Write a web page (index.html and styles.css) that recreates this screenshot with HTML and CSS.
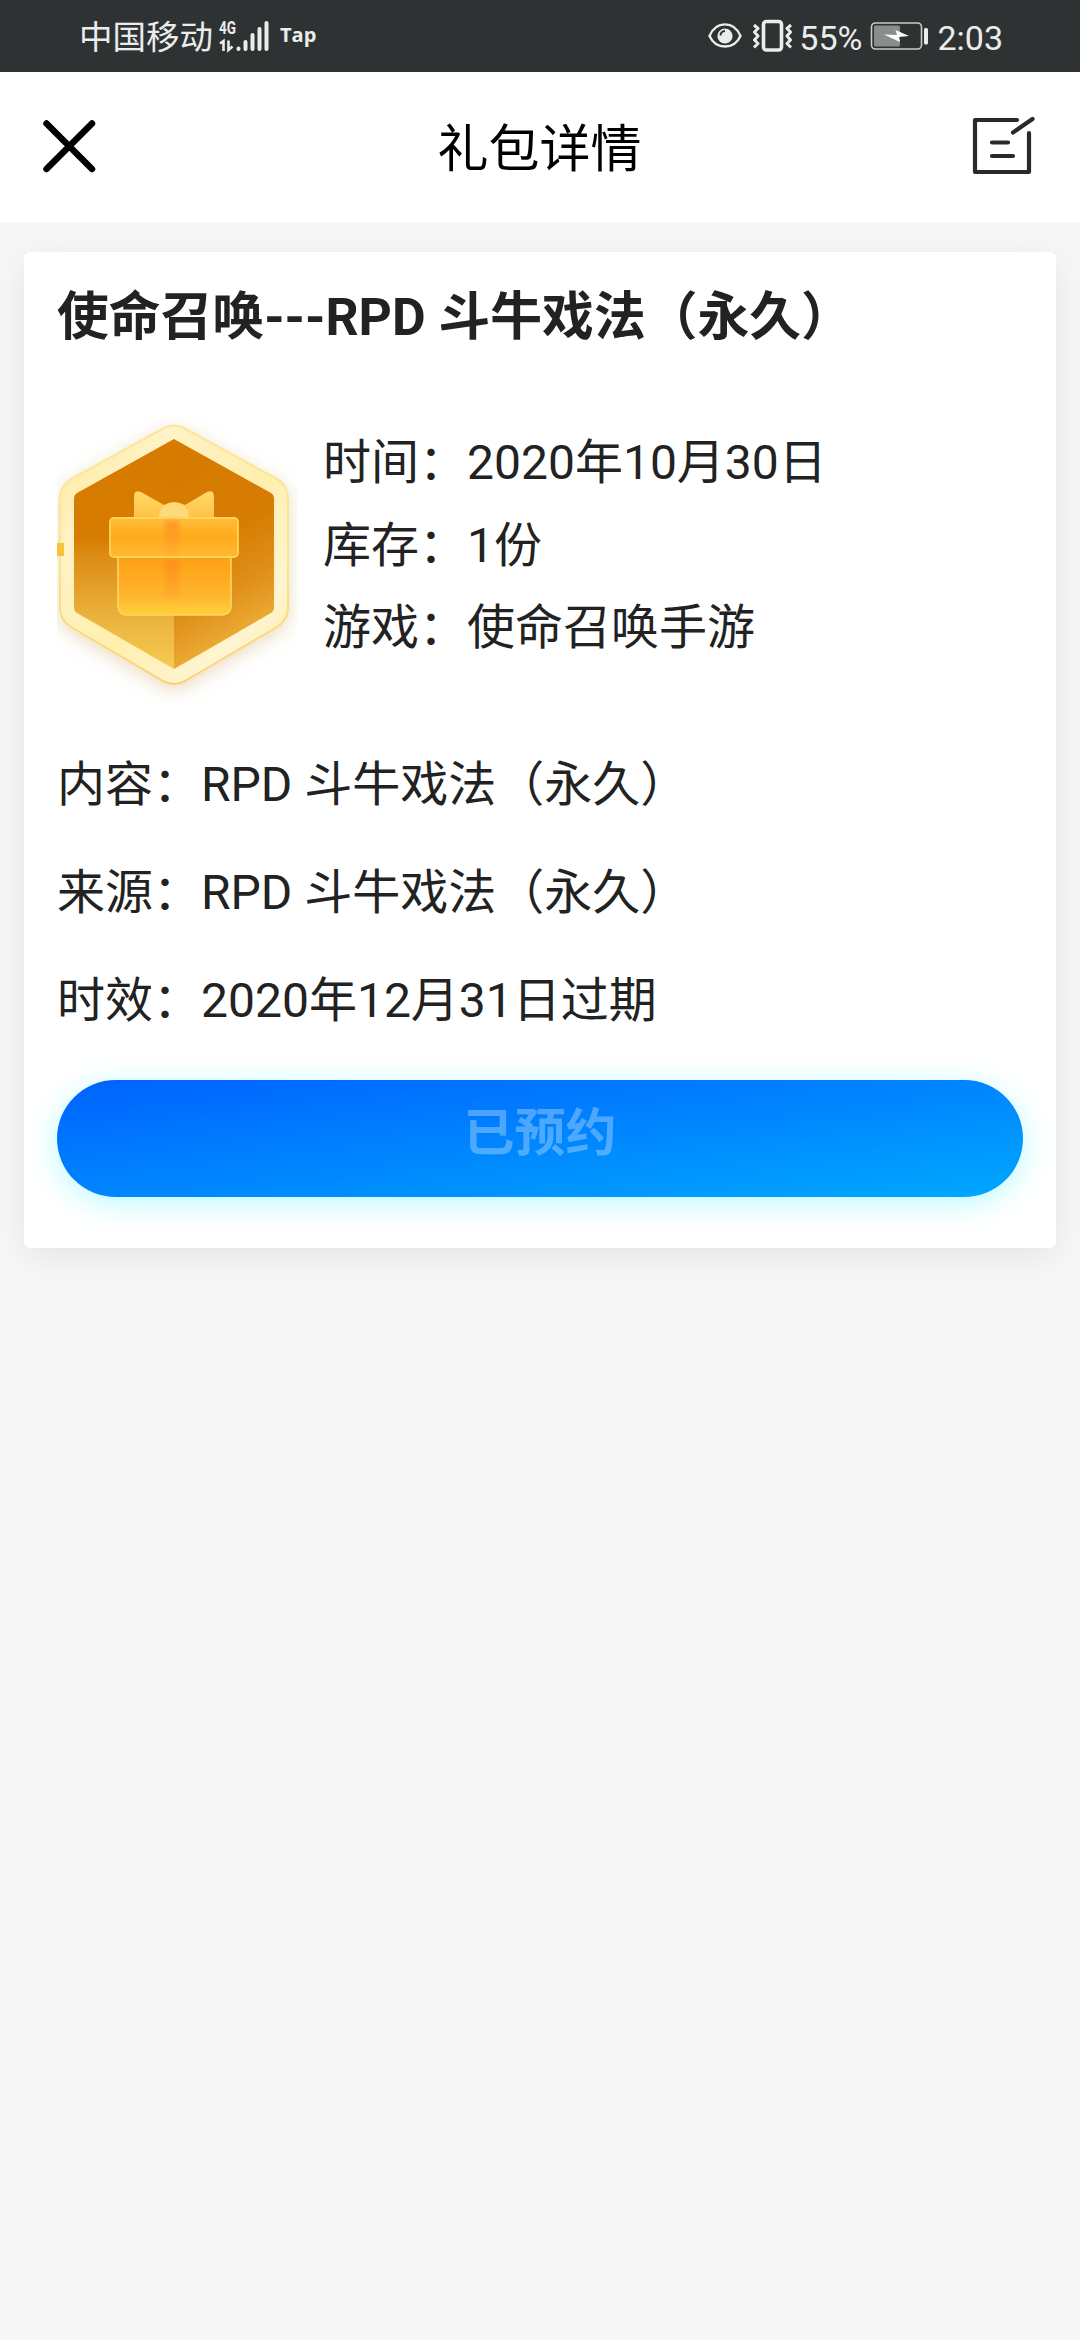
FILE: index.html
```html
<!DOCTYPE html>
<html lang="zh-CN">
<head>
<meta charset="utf-8">
<title>礼包详情</title>
<link rel="stylesheet" href="styles.css">
</head>
<body>
<div class="status">
  <div class="status-left">
    <span class="carrier">中国移动</span>
    <svg class="signal" width="52" height="36" viewBox="0 0 52 36">
      <text x="0" y="16" class="net" textLength="17" lengthAdjust="spacingAndGlyphs">4G</text>
      <g fill="none" stroke="#ebecec" stroke-width="2.6"><path d="M1 25.500 4.500 23v10M9.500 22.500v9.500l4-3.500"/></g>
      <g stroke="#ebecec" stroke-width="4" stroke-linecap="round"><path d="M19.500 30.500v.5M26.500 24v7M33.500 17v14M40.500 11v20M47.500 5v26"/></g>
    </svg>
    <span class="tap">Tap</span>
  </div>
  <div class="status-right">
    <svg class="eye" width="34" height="28" viewBox="0 0 34 28"><path d="M1.500 14C8-1.500 26-1.500 32.500 14 26 28 8 28 1.500 14Z" fill="none" stroke="#ebecec" stroke-width="2.400"/><circle cx="17" cy="14" r="7.600" fill="#ebecec"/><path d="M12.500 13.500a4.500 4.500 0 0 1 4.500-4.500" stroke="#2f3233" stroke-width="2" fill="none"/></svg>
    <svg class="vibrate" width="42" height="34" viewBox="0 0 42 34"><rect x="11.500" y="2.500" width="18" height="28.500" rx="3" fill="none" stroke="#ebecec" stroke-width="3.600"/><path d="M2 6l4 3.500-3.500 3.500 3.500 4-3.500 4 3.500 3.500-4 4M39 6l-4 3.500 3.500 3.500-3.500 4 3.500 4-3.500 3.500 4 4" fill="none" stroke="#ebecec" stroke-width="3" stroke-linejoin="round"/></svg>
    <span class="percent">55%</span>
    <svg class="battery" width="60" height="30" viewBox="0 0 60 30"><rect x="1.500" y="2" width="50" height="26" rx="4" fill="none" stroke="#c9caca" stroke-width="1.600"/><rect x="4" y="4.500" width="26" height="21" rx="1.500" fill="#8b8d8d"/><path d="M14 13.500 27 14 25.500 9 39 15 28.500 16 30 21Z" fill="#fff"/><rect x="54" y="7" width="4" height="16.500" rx="1.500" fill="#ebecec"/></svg>
    <span class="clock">2:03</span>
  </div>
</div>
<header class="nav">
  <svg width="54" height="54" viewBox="0 0 54 54"><path d="M4.500 4.500 50 50M50 4.500 4.500 50" stroke="#000" stroke-width="6.500" stroke-linecap="round"/></svg>
  <h1>礼包详情</h1>
  <svg width="64" height="60" viewBox="0 0 64 60"><g fill="none" stroke="#2a2a2a" stroke-width="4.200" stroke-linecap="round"><path d="M45 4H3v52h54V17" stroke-linejoin="round"/><path d="M41 16.500 60.500 3M20 26.500h16M20 40h21"/></g></svg>
</header>
<main class="card">
  <h2>使命召唤---RPD 斗牛戏法（永久）</h2>
  <section class="summary">
    <svg class="badge" width="240" height="290" viewBox="0 0 240 290">
      <defs>
        <filter id="glow" x="-20%" y="-20%" width="140%" height="140%"><feDropShadow dx="0" dy="5" stdDeviation="9" flood-color="#c99a50" flood-opacity=".35"/></filter>
        <filter id="soft"><feGaussianBlur stdDeviation="2.500"/></filter>
        <linearGradient id="rim" x1="0" y1="0" x2="1" y2="1"><stop offset="0" stop-color="#ffe98f"/><stop offset=".25" stop-color="#fff2c6"/><stop offset=".55" stop-color="#ffefae"/><stop offset=".8" stop-color="#fff5d2"/><stop offset="1" stop-color="#ffe79a"/></linearGradient>
        <linearGradient id="edge" x1="0" y1="0" x2="0" y2="1"><stop offset="0" stop-color="#fbe79a"/><stop offset=".5" stop-color="#fbe68c"/><stop offset="1" stop-color="#fbd26a"/></linearGradient>
        <linearGradient id="left" x1="0" y1="0" x2="0" y2="1"><stop offset="0" stop-color="#d67b00"/><stop offset=".43" stop-color="#d67c00"/><stop offset=".5" stop-color="#dc8b14"/><stop offset=".8" stop-color="#ecb541"/><stop offset="1" stop-color="#f5ca50"/></linearGradient>
        <linearGradient id="right" x1="0" y1="0" x2=".25" y2="1"><stop offset="0" stop-color="#d67b00"/><stop offset=".5" stop-color="#d67c02"/><stop offset=".75" stop-color="#df8f1a"/><stop offset="1" stop-color="#eeb03a"/></linearGradient>
        <linearGradient id="lid" x1="0" y1="0" x2="0" y2="1"><stop offset="0" stop-color="#ffbd38"/><stop offset=".5" stop-color="#ffaa1b"/><stop offset="1" stop-color="#ffba33"/></linearGradient>
        <linearGradient id="box" x1="0" y1="0" x2="0" y2="1"><stop offset="0" stop-color="#ff9f12"/><stop offset=".65" stop-color="#ffb42e"/><stop offset="1" stop-color="#ffd03a"/></linearGradient>
        <linearGradient id="bow" x1="0" y1="0" x2="0" y2="1"><stop offset="0" stop-color="#ffda68"/><stop offset="1" stop-color="#ffc247"/></linearGradient>
        <linearGradient id="ribbon" x1="0" y1="0" x2="0" y2="1"><stop offset="0" stop-color="#fb821b" stop-opacity=".6"/><stop offset="1" stop-color="#ff9d29" stop-opacity=".3"/></linearGradient>
      </defs>
      <path d="M107 11Q117 6 127 11L220 62Q231 68 231 82V191Q231 203 220 210L128 264Q117 270 106 264L14 210Q3 203 3 191V82Q3 69 14 62Z" fill="url(#rim)" stroke="url(#edge)" stroke-width="2" filter="url(#glow)"/>
      <path d="M117 22 20 76Q17 78 17 82V190Q17 194 20 196L117 252Z" fill="url(#left)"/>
      <path d="M117 22 214 76Q217 78 217 82V190Q217 194 214 196L117 252Z" fill="url(#right)"/>
      <path d="M0 126h7v13H0Z" fill="#f7c23d"/>
      <path d="M77 100V80Q77 72 84 75L107 88Q117 82 128 88L150 75Q157 72 157 80V100Z" fill="url(#bow)"/>
      <path d="M102 100C102 81 132 81 132 100Z" fill="#ffda7c"/>
      <path d="M61 139H174V188Q174 198 164 198H71Q61 198 61 188Z" fill="url(#box)" stroke="#ffd65f" stroke-width="1.600"/>
      <rect x="108" y="143" width="14" height="40" fill="url(#ribbon)" filter="url(#soft)"/>
      <rect x="53" y="101" width="128" height="39" rx="4" fill="url(#lid)" stroke="#ffd45a" stroke-width="1.800"/>
      <rect x="108" y="104" width="14" height="33" fill="url(#ribbon)" filter="url(#soft)"/>
    </svg>
    <div class="facts">
      <p>时间：2020年10月30日</p>
      <p>库存：1份</p>
      <p>游戏：使命召唤手游</p>
    </div>
  </section>
  <section class="details">
    <p>内容：RPD 斗牛戏法（永久）</p>
    <p>来源：RPD 斗牛戏法（永久）</p>
    <p>时效：2020年12月31日过期</p>
  </section>
  <button class="reserve" type="button">已预约</button>
</main>
</body>
</html>
```

FILE: styles.css
```css
* {
  box-sizing: border-box;
}

body {
  margin: 0;
  min-height: 2340px;
  background: #f7f7f7;
  color: #222;
  font-family: Roboto, "Noto Sans CJK SC", sans-serif;
}

h1, h2, p {
  margin: 0;
  font-weight: 400;
  white-space: nowrap;
}

svg {
  display: block;
  flex: none;
}

.status {
  display: flex;
  justify-content: space-between;
  height: 72px;
  padding: 0 77px 0 79px;
  background: #2f3233;
  color: #ebecec;
}

.status-left,
.status-right {
  display: flex;
  align-items: center;
  white-space: nowrap;
}

.carrier {
  font-size: 33.5px;
  line-height: 72px;
  padding-top: 4px;
}

.signal {
  margin: 0 0 0 6px;
}

.net {
  fill: #ebecec;
  font: 700 18px Roboto, sans-serif;
}

.tap {
  margin: -4px 0 0 9px;
  font: 700 20px "Open Sans", sans-serif;
}

.vibrate {
  margin-left: 10px;
}

.percent,
.clock {
  font-size: 34px;
  line-height: 72px;
  padding-top: 3px;
}

.percent {
  margin-left: 5px;
}

.battery {
  margin-left: 8px;
}

.clock {
  margin-left: 7px;
}

.nav {
  display: flex;
  align-items: center;
  justify-content: space-between;
  height: 150px;
  padding: 0 44px 2px 42px;
  background: #fff;
  color: #000;
}

.nav h1 {
  font-size: 51px;
  line-height: 60px;
  padding: 8px 0 0 11px;
}

.card {
  display: flex;
  flex-direction: column;
  height: 996px;
  margin: 30px 24px 0;
  padding: 24px 33px 51px;
  border-radius: 6px;
  background: #fff;
  box-shadow: 0 9px 36px rgba(0, 0, 0, 0.08);
}

.card h2 {
  font-size: 51.8px;
  font-weight: 700;
  line-height: 84px;
}

.summary {
  display: flex;
  gap: 26px;
  height: 290px;
  margin-top: 57px;
}

.facts {
  padding-top: 5px;
}

.facts p {
  font-size: 48px;
  line-height: 82.5px;
}

.details {
  margin-top: 24px;
}

.details p {
  font-size: 48px;
  line-height: 108px;
}

.reserve {
  height: 117px;
  margin-top: auto;
  padding: 0 0 11px;
  border: 0;
  border-radius: 59px;
  background: linear-gradient(to bottom right, #0062ff, #00a8ff);
  box-shadow: 0 6px 30px rgba(0, 240, 255, 0.28);
  color: rgba(255, 255, 255, 0.3);
  font: 700 51px/1 Roboto, "Noto Sans CJK SC", sans-serif;
}
```
